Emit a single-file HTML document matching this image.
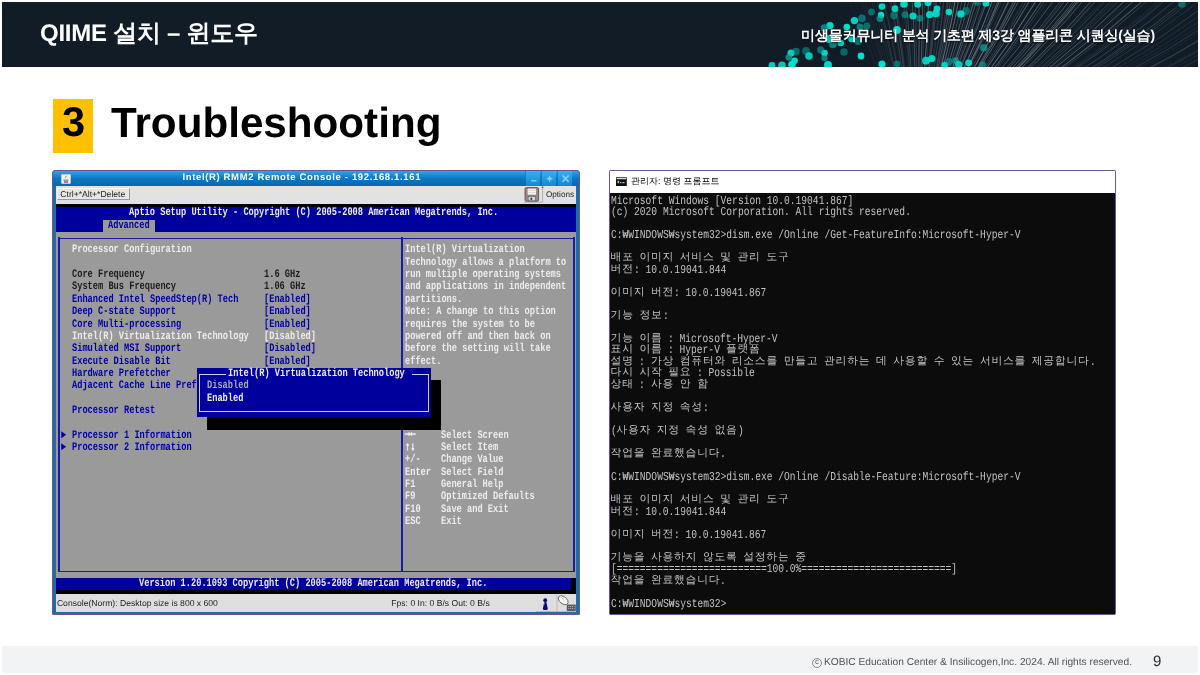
<!DOCTYPE html>
<html lang="ko">
<head>
<meta charset="utf-8">
<title>QIIME 설치 – 윈도우</title>
<style>
*{box-sizing:border-box;margin:0;padding:0}
html,body{width:1200px;height:675px;overflow:hidden;background:#fff}
body{position:relative;font-family:"Liberation Sans",sans-serif;color:#000;text-rendering:geometricPrecision}
.abs{position:absolute}
#hdr,#w1,#w2,#ftr,#num,#ttl{will-change:transform}
/* ---------- slide chrome ---------- */
#hdr{position:absolute;left:2px;top:2px;width:1196px;height:65px;background:#111c27;overflow:hidden}
#hdr svg{position:absolute;left:0;top:0}
#hdr .t1{position:absolute;left:38px;top:14px;font-weight:bold;font-size:24px;line-height:36px;color:#fff;white-space:nowrap;letter-spacing:-.25px}
#hdr .t2{position:absolute;right:43px;top:21px;font-weight:bold;font-size:14px;letter-spacing:-.15px;line-height:24px;color:#fff;white-space:nowrap;text-shadow:0 1px 2px rgba(0,0,0,.7)}
#num{position:absolute;left:53px;top:99px;width:40px;height:54px;background:#ffc000;font-weight:bold;font-size:41.6px;line-height:46px;text-align:center;letter-spacing:-1px}
#ttl{position:absolute;left:111px;top:98.2px;font-weight:bold;font-size:42.2px;line-height:50px;white-space:nowrap}
#ftr{position:absolute;left:2px;top:646px;width:1196px;height:27px;background:#f2f3f5}
#ftr .c{position:absolute;right:66px;top:9.3px;font-size:10.2px;line-height:16px;color:#555;white-space:nowrap}
#ftr .p{position:absolute;left:1151px;top:7.2px;font-size:15px;line-height:18px;color:#2a2a2a}
/* ---------- BIOS remote console window ---------- */
#w1{position:absolute;left:52px;top:170px;width:528px;height:444.7px;background:#1f6ea3;border:1px solid #6e5494;border-radius:3px 3px 1px 1px}
#w1 .tb{position:absolute;left:0;top:0;width:526px;height:15px;background:linear-gradient(#2fa5e6,#0b78c4 50%,#0a66ad);color:#fff;font-weight:bold;font-size:9.5px;line-height:14px;text-align:left;padding-left:129.4px;white-space:nowrap;letter-spacing:.65px;border-radius:2px 2px 0 0}
#w1 .tool{position:absolute;left:3.3px;top:15px;width:519.4px;height:18.3px;background:#e2e2e2}
#w1 .scr{position:absolute;left:3.3px;top:33px;width:519.4px;height:390px;background:#000;overflow:hidden}
#w1 .stat{position:absolute;left:3.3px;top:422.6px;width:519.4px;height:18.4px;background:#dedede;font-size:8px;line-height:18px;color:#222;white-space:nowrap}
#w1 .ic{position:absolute;left:8px;top:2.5px;width:10px;height:10px}
#w1 .wb{position:absolute;top:0;width:14.6px;height:14.5px;background:linear-gradient(#35b1f0,#1286d4);border-left:1px solid rgba(0,60,120,.35)}
#w1 .wb svg{position:absolute;left:0;top:0}
#w1 .tool .btn{position:absolute;left:.4px;top:2.3px;width:73.4px;height:12px;font-size:8.6px;line-height:11px;color:#222;padding-left:2.6px;white-space:nowrap;background:#e6e6e6;border:1px solid;border-color:#f8f8f8 #9a9a9a #9a9a9a #f8f8f8}
#w1 .tool .opt{position:absolute;left:489.6px;top:2px;font-size:8.2px;line-height:14px;color:#222;white-space:nowrap}
#w1 .tool svg{position:absolute;left:467.8px;top:0}
#w1 .stat span{position:absolute;top:0;font-size:8.6px;line-height:18.4px;color:#222}
#w1 .stat svg{position:absolute;left:480px;top:0}
.cc{display:inline-block;width:10px;height:10px;border:.9px solid #8a8a8a;color:#666;border-radius:50%;font-size:8px;line-height:6.8px;text-align:center;vertical-align:-.6px;margin-right:2px;margin-left:1.4px;position:relative;top:-2.2px}
.scr .b,.scr .l,.scr .t{position:absolute}
.scr .bl{background:#00009c}
.scr .gr{background:#9a9a9a}
.scr .bk{background:#000}
.scr .lb{background:#1a1aa6}
.scr .lw{background:#cfcfe6}
.scr .t{font-family:"Liberation Mono",monospace;font-weight:bold;font-size:11.5px;line-height:12.35px;height:12.35px;white-space:pre;transform-origin:0 0;transform:scaleX(.7535);margin-top:.1px}
.scr .w{color:#ececec}
.scr .ar{-webkit-text-stroke:.8px #ececec}
.scr .up{margin-top:-1.5px}
.scr .u{color:#0000a8}
.scr .k{color:#1c1c1c}
.scr .g{color:#a8a8b6}
/* ---------- cmd window ---------- */
#w2{position:absolute;left:609px;top:170px;width:506.8px;height:444.7px;background:#0c0c0c;border:1px solid #6e5494;border-radius:1.5px}
#w2 .tb{position:absolute;left:0;top:0;width:504.8px;height:22.3px;background:#fff;font-size:9px;line-height:23px;color:#000;white-space:nowrap}
#w2 .tb svg{position:absolute;left:6.3px;top:6.3px}
#w2 .tb span{position:absolute;left:21px;top:0;font-size:9px;line-height:20px;letter-spacing:0}
#w2 .c{position:absolute;font-family:"Liberation Mono",monospace;font-size:12.1px;line-height:11.53px;height:11.53px;color:#c2c2c2;white-space:pre;transform-origin:0 0;transform:scaleX(.7947)}
#w2 .k{transform:none;font-size:10.8px;letter-spacing:.74px;color:#c4c4c4}
</style>
</head>
<body>
<div id="hdr">
<!--FIBRE-->
<svg width="1196" height="65" viewBox="0 0 1196 65">
<defs><filter id="bf" x="-50%" y="-50%" width="200%" height="200%"><feGaussianBlur stdDeviation=".45"/></filter><linearGradient id="fade" x1="0" x2="1"><stop offset="0" stop-color="#111c27" stop-opacity="1"/><stop offset="1" stop-color="#111c27" stop-opacity="0"/></linearGradient></defs>
<g fill="none" stroke-linecap="round">
<path d="M878.7 86.0Q834.4 -23.5 769.0 -121.8" stroke="#9fb3bf" stroke-width="0.5" opacity="0.03"/>
<path d="M878.9 85.8Q835.0 -23.8 769.9 -122.3" stroke="#b9c7cf" stroke-width="0.5" opacity="0.03"/>
<path d="M881.1 84.7Q840.0 -26.0 777.4 -126.1" stroke="#b9c7cf" stroke-width="0.5" opacity="0.05"/>
<path d="M882.0 84.3Q842.2 -26.9 780.6 -127.7" stroke="#b9c7cf" stroke-width="0.5" opacity="0.05"/>
<path d="M882.2 84.2Q842.6 -27.1 781.4 -128.1" stroke="#cfd9de" stroke-width="0.5" opacity="0.07"/>
<path d="M884.1 83.3Q847.0 -28.8 787.9 -131.1" stroke="#7f98a6" stroke-width="0.6" opacity="0.04"/>
<path d="M884.6 83.1Q848.0 -29.2 789.6 -131.8" stroke="#b9c7cf" stroke-width="0.7" opacity="0.07"/>
<path d="M886.1 82.5Q851.5 -30.5 794.8 -134.1" stroke="#7f98a6" stroke-width="0.6" opacity="0.08"/>
<path d="M887.1 82.0Q853.9 -31.3 798.4 -135.6" stroke="#b9c7cf" stroke-width="0.5" opacity="0.09"/>
<path d="M887.6 81.9Q854.9 -31.6 799.9 -136.2" stroke="#cfd9de" stroke-width="0.7" opacity="0.08"/>
<path d="M888.5 81.5Q857.0 -32.3 803.1 -137.4" stroke="#b9c7cf" stroke-width="0.7" opacity="0.08"/>
<path d="M889.2 81.2Q858.6 -32.9 805.6 -138.4" stroke="#9fb3bf" stroke-width="0.6" opacity="0.10"/>
<path d="M890.6 80.7Q861.8 -33.9 810.5 -140.2" stroke="#cfd9de" stroke-width="0.7" opacity="0.09"/>
<path d="M892.1 80.2Q865.2 -34.9 815.7 -142.1" stroke="#cfd9de" stroke-width="0.5" opacity="0.15"/>
<path d="M893.4 79.7Q868.1 -35.6 820.1 -143.5" stroke="#cfd9de" stroke-width="0.9" opacity="0.08"/>
<path d="M894.6 79.3Q871.0 -36.4 824.5 -144.9" stroke="#7f98a6" stroke-width="0.7" opacity="0.12"/>
<path d="M894.7 79.3Q871.1 -36.4 824.6 -145.0" stroke="#9fb3bf" stroke-width="0.9" opacity="0.12"/>
<path d="M895.5 79.1Q873.0 -36.9 827.5 -145.9" stroke="#9fb3bf" stroke-width="0.9" opacity="0.17"/>
<path d="M897.8 78.4Q878.3 -38.1 835.6 -148.2" stroke="#7f98a6" stroke-width="0.9" opacity="0.14"/>
<path d="M897.9 78.4Q878.4 -38.1 835.7 -148.2" stroke="#9fb3bf" stroke-width="0.7" opacity="0.17"/>
<path d="M898.6 78.2Q880.0 -38.5 838.2 -148.9" stroke="#cfd9de" stroke-width="0.5" opacity="0.10"/>
<path d="M901.1 77.6Q885.7 -39.5 846.9 -151.1" stroke="#b9c7cf" stroke-width="0.6" opacity="0.17"/>
<path d="M901.7 77.4Q886.9 -39.8 848.8 -151.6" stroke="#9fb3bf" stroke-width="0.9" opacity="0.20"/>
<path d="M903.1 77.1Q890.3 -40.3 854.0 -152.7" stroke="#b9c7cf" stroke-width="0.7" opacity="0.12"/>
<path d="M903.2 77.1Q890.4 -40.3 854.1 -152.7" stroke="#cfd9de" stroke-width="0.7" opacity="0.21"/>
<path d="M904.0 76.9Q892.2 -40.6 857.0 -153.3" stroke="#b9c7cf" stroke-width="0.9" opacity="0.19"/>
<path d="M906.5 76.5Q897.8 -41.3 865.5 -155.0" stroke="#b9c7cf" stroke-width="0.6" opacity="0.10"/>
<path d="M907.8 76.2Q900.8 -41.7 870.2 -155.7" stroke="#7f98a6" stroke-width="0.6" opacity="0.23"/>
<path d="M908.5 76.1Q902.3 -41.8 872.5 -156.1" stroke="#7f98a6" stroke-width="0.7" opacity="0.10"/>
<path d="M908.5 76.1Q902.4 -41.8 872.5 -156.1" stroke="#cfd9de" stroke-width="0.5" opacity="0.22"/>
<path d="M909.7 75.9Q905.1 -42.1 876.7 -156.7" stroke="#cfd9de" stroke-width="0.9" opacity="0.25"/>
<path d="M911.6 75.7Q909.4 -42.4 883.4 -157.6" stroke="#9fb3bf" stroke-width="0.9" opacity="0.10"/>
<path d="M913.1 75.5Q912.7 -42.6 888.5 -158.2" stroke="#b9c7cf" stroke-width="0.9" opacity="0.32"/>
<path d="M914.3 75.4Q915.5 -42.7 892.9 -158.6" stroke="#9fb3bf" stroke-width="0.5" opacity="0.24"/>
<path d="M914.7 75.4Q916.4 -42.7 894.1 -158.7" stroke="#9fb3bf" stroke-width="0.7" opacity="0.22"/>
<path d="M916.6 75.2Q920.7 -42.8 900.9 -159.3" stroke="#b9c7cf" stroke-width="0.9" opacity="0.14"/>
<path d="M916.8 75.2Q921.1 -42.8 901.5 -159.3" stroke="#cfd9de" stroke-width="0.7" opacity="0.35"/>
<path d="M918.8 75.1Q925.6 -42.8 908.4 -159.7" stroke="#cfd9de" stroke-width="0.9" opacity="0.33"/>
<path d="M919.3 75.1Q926.7 -42.8 910.2 -159.8" stroke="#7f98a6" stroke-width="0.5" opacity="0.12"/>
<path d="M920.0 75.0Q928.3 -42.8 912.6 -159.8" stroke="#9fb3bf" stroke-width="0.6" opacity="0.23"/>
<path d="M922.0 75.0Q932.8 -42.6 919.6 -160.0" stroke="#b9c7cf" stroke-width="0.7" opacity="0.38"/>
<path d="M922.3 75.0Q933.5 -42.6 920.7 -160.0" stroke="#9fb3bf" stroke-width="0.7" opacity="0.38"/>
<path d="M923.5 75.0Q936.0 -42.4 924.6 -160.0" stroke="#b9c7cf" stroke-width="0.7" opacity="0.18"/>
<path d="M925.1 75.0Q939.8 -42.2 930.4 -159.9" stroke="#b9c7cf" stroke-width="0.7" opacity="0.18"/>
<path d="M925.8 75.0Q941.3 -42.0 932.9 -159.9" stroke="#b9c7cf" stroke-width="0.6" opacity="0.36"/>
<path d="M926.6 75.1Q943.1 -41.9 935.6 -159.8" stroke="#b9c7cf" stroke-width="0.6" opacity="0.36"/>
<path d="M928.2 75.1Q946.7 -41.5 941.2 -159.5" stroke="#9fb3bf" stroke-width="0.5" opacity="0.23"/>
<path d="M928.9 75.2Q948.2 -41.3 943.5 -159.4" stroke="#7f98a6" stroke-width="0.6" opacity="0.28"/>
<path d="M930.6 75.3Q952.0 -40.9 949.4 -158.9" stroke="#7f98a6" stroke-width="0.7" opacity="0.45"/>
<path d="M932.3 75.5Q955.8 -40.3 955.4 -158.4" stroke="#b9c7cf" stroke-width="0.9" opacity="0.16"/>
<path d="M933.0 75.5Q957.3 -40.0 957.8 -158.2" stroke="#cfd9de" stroke-width="0.5" opacity="0.30"/>
<path d="M933.2 75.5Q957.7 -40.0 958.4 -158.1" stroke="#9fb3bf" stroke-width="0.5" opacity="0.26"/>
<path d="M934.3 75.7Q960.2 -39.6 962.3 -157.7" stroke="#cfd9de" stroke-width="0.6" opacity="0.43"/>
<path d="M935.5 75.8Q962.8 -39.1 966.3 -157.1" stroke="#9fb3bf" stroke-width="0.7" opacity="0.30"/>
<path d="M936.7 76.0Q965.6 -38.5 970.7 -156.5" stroke="#cfd9de" stroke-width="0.9" opacity="0.52"/>
<path d="M938.5 76.3Q969.5 -37.7 976.8 -155.6" stroke="#b9c7cf" stroke-width="0.6" opacity="0.52"/>
<path d="M938.6 76.3Q969.8 -37.6 977.3 -155.5" stroke="#b9c7cf" stroke-width="0.9" opacity="0.15"/>
<path d="M940.4 76.6Q973.6 -36.7 983.3 -154.4" stroke="#7f98a6" stroke-width="0.9" opacity="0.39"/>
<path d="M942.2 77.0Q977.7 -35.7 989.7 -153.2" stroke="#9fb3bf" stroke-width="0.5" opacity="0.38"/>
<path d="M942.3 77.0Q977.8 -35.7 989.9 -153.2" stroke="#b9c7cf" stroke-width="0.5" opacity="0.47"/>
<path d="M943.9 77.3Q981.6 -34.6 995.8 -151.9" stroke="#9fb3bf" stroke-width="0.6" opacity="0.54"/>
<path d="M945.3 77.7Q984.6 -33.7 1000.6 -150.8" stroke="#7f98a6" stroke-width="0.6" opacity="0.28"/>
<path d="M946.4 77.9Q987.0 -33.0 1004.3 -149.8" stroke="#9fb3bf" stroke-width="0.6" opacity="0.35"/>
<path d="M946.5 77.9Q987.1 -33.0 1004.5 -149.8" stroke="#cfd9de" stroke-width="0.9" opacity="0.32"/>
<path d="M947.7 78.3Q989.8 -32.1 1008.7 -148.7" stroke="#b9c7cf" stroke-width="0.6" opacity="0.58"/>
<path d="M949.2 78.7Q993.2 -30.9 1014.2 -147.2" stroke="#b9c7cf" stroke-width="0.9" opacity="0.17"/>
<path d="M950.2 79.0Q995.3 -30.2 1017.4 -146.2" stroke="#b9c7cf" stroke-width="0.6" opacity="0.54"/>
<path d="M952.0 79.5Q999.3 -28.7 1023.7 -144.2" stroke="#9fb3bf" stroke-width="0.5" opacity="0.47"/>
<path d="M952.8 79.8Q1001.0 -28.0 1026.4 -143.4" stroke="#9fb3bf" stroke-width="0.9" opacity="0.43"/>
<path d="M953.0 79.9Q1001.4 -27.9 1027.1 -143.1" stroke="#7f98a6" stroke-width="0.6" opacity="0.20"/>
<path d="M955.3 80.7Q1006.6 -25.7 1035.4 -140.3" stroke="#9fb3bf" stroke-width="0.9" opacity="0.22"/>
<path d="M955.3 80.7Q1006.5 -25.8 1035.1 -140.4" stroke="#7f98a6" stroke-width="0.9" opacity="0.60"/>
<path d="M956.6 81.1Q1009.3 -24.6 1039.6 -138.7" stroke="#7f98a6" stroke-width="0.6" opacity="0.44"/>
<path d="M957.9 81.6Q1012.2 -23.3 1044.1 -137.0" stroke="#b9c7cf" stroke-width="0.9" opacity="0.45"/>
<path d="M958.5 81.9Q1013.6 -22.6 1046.4 -136.1" stroke="#b9c7cf" stroke-width="0.7" opacity="0.60"/>
<path d="M959.4 82.2Q1015.4 -21.7 1049.3 -134.9" stroke="#cfd9de" stroke-width="0.5" opacity="0.25"/>
<path d="M961.0 82.9Q1019.0 -20.0 1055.0 -132.5" stroke="#cfd9de" stroke-width="0.6" opacity="0.22"/>
<path d="M962.6 83.6Q1022.4 -18.2 1060.5 -130.0" stroke="#b9c7cf" stroke-width="0.5" opacity="0.54"/>
<path d="M962.3 83.5Q1021.8 -18.5 1059.5 -130.4" stroke="#b9c7cf" stroke-width="0.7" opacity="0.52"/>
<path d="M964.3 84.5Q1026.3 -16.1 1066.6 -127.1" stroke="#b9c7cf" stroke-width="0.9" opacity="0.25"/>
<path d="M964.6 84.6Q1026.9 -15.8 1067.6 -126.6" stroke="#b9c7cf" stroke-width="0.9" opacity="0.23"/>
<path d="M965.3 84.9Q1028.3 -15.0 1069.8 -125.5" stroke="#cfd9de" stroke-width="0.6" opacity="0.60"/>
<path d="M966.3 85.4Q1030.5 -13.7 1073.3 -123.8" stroke="#b9c7cf" stroke-width="0.9" opacity="0.40"/>
<path d="M968.2 86.4Q1034.6 -11.2 1080.0 -120.3" stroke="#9fb3bf" stroke-width="0.7" opacity="0.23"/>
<path d="M969.2 87.0Q1036.8 -9.8 1083.5 -118.3" stroke="#cfd9de" stroke-width="0.5" opacity="0.43"/>
<path d="M970.2 87.6Q1039.0 -8.5 1086.9 -116.4" stroke="#9fb3bf" stroke-width="0.5" opacity="0.51"/>
<path d="M970.2 87.6Q1039.1 -8.4 1087.1 -116.3" stroke="#9fb3bf" stroke-width="0.5" opacity="0.60"/>
<path d="M972.2 88.7Q1043.4 -5.5 1094.0 -112.2" stroke="#7f98a6" stroke-width="0.6" opacity="0.20"/>
<path d="M972.5 88.9Q1043.9 -5.1 1094.9 -111.7" stroke="#cfd9de" stroke-width="0.7" opacity="0.60"/>
<path d="M974.3 90.0Q1047.8 -2.4 1101.2 -107.8" stroke="#7f98a6" stroke-width="0.9" opacity="0.60"/>
<path d="M975.3 90.7Q1050.0 -0.8 1104.7 -105.4" stroke="#cfd9de" stroke-width="0.6" opacity="0.21"/>
<path d="M975.1 90.6Q1049.7 -1.0 1104.1 -105.9" stroke="#9fb3bf" stroke-width="0.5" opacity="0.31"/>
<path d="M976.2 91.3Q1052.0 0.7 1107.8 -103.4" stroke="#9fb3bf" stroke-width="0.6" opacity="0.22"/>
<path d="M977.9 92.4Q1055.5 3.4 1113.6 -99.4" stroke="#7f98a6" stroke-width="0.5" opacity="0.23"/>
<path d="M977.8 92.4Q1055.4 3.3 1113.3 -99.6" stroke="#b9c7cf" stroke-width="0.7" opacity="0.38"/>
<path d="M980.0 94.0Q1060.1 7.2 1120.9 -94.1" stroke="#b9c7cf" stroke-width="0.5" opacity="0.53"/>
<path d="M980.6 94.4Q1061.4 8.3 1123.0 -92.5" stroke="#7f98a6" stroke-width="0.7" opacity="0.26"/>
<path d="M981.1 94.9Q1062.5 9.3 1124.9 -91.0" stroke="#b9c7cf" stroke-width="0.9" opacity="0.27"/>
<path d="M982.3 95.8Q1065.1 11.6 1129.1 -87.7" stroke="#9fb3bf" stroke-width="0.7" opacity="0.55"/>
<path d="M983.5 96.8Q1067.7 13.9 1133.3 -84.3" stroke="#cfd9de" stroke-width="0.6" opacity="0.51"/>
<path d="M984.1 97.3Q1068.9 15.0 1135.3 -82.6" stroke="#cfd9de" stroke-width="0.9" opacity="0.37"/>
<path d="M984.6 97.7Q1069.9 16.0 1137.0 -81.2" stroke="#b9c7cf" stroke-width="0.7" opacity="0.57"/>
<path d="M984.9 97.9Q1070.6 16.6 1138.0 -80.3" stroke="#cfd9de" stroke-width="0.6" opacity="0.31"/>
<path d="M985.7 98.7Q1072.3 18.4 1140.9 -77.8" stroke="#9fb3bf" stroke-width="0.6" opacity="0.60"/>
<path d="M987.7 100.4Q1076.5 22.6 1147.7 -71.6" stroke="#cfd9de" stroke-width="0.7" opacity="0.48"/>
<path d="M988.4 101.1Q1078.0 24.1 1150.2 -69.3" stroke="#7f98a6" stroke-width="0.9" opacity="0.18"/>
<path d="M988.7 101.4Q1078.6 24.8 1151.2 -68.4" stroke="#cfd9de" stroke-width="0.5" opacity="0.44"/>
<path d="M990.0 102.6Q1081.4 27.8 1155.7 -64.0" stroke="#7f98a6" stroke-width="0.5" opacity="0.26"/>
<path d="M990.6 103.2Q1082.6 29.2 1157.7 -61.9" stroke="#b9c7cf" stroke-width="0.7" opacity="0.28"/>
<path d="M991.7 104.4Q1085.0 32.0 1161.8 -57.8" stroke="#7f98a6" stroke-width="0.6" opacity="0.50"/>
<path d="M992.3 105.1Q1086.3 33.5 1163.9 -55.6" stroke="#cfd9de" stroke-width="0.5" opacity="0.27"/>
<path d="M993.0 105.8Q1087.7 35.2 1166.2 -53.1" stroke="#9fb3bf" stroke-width="0.6" opacity="0.39"/>
<path d="M994.0 106.8Q1089.7 37.7 1169.5 -49.4" stroke="#cfd9de" stroke-width="0.6" opacity="0.44"/>
<path d="M994.2 107.1Q1090.1 38.2 1170.2 -48.6" stroke="#7f98a6" stroke-width="0.7" opacity="0.27"/>
<path d="M994.9 107.9Q1091.6 40.1 1172.6 -45.9" stroke="#cfd9de" stroke-width="0.6" opacity="0.15"/>
<path d="M995.4 108.5Q1092.8 41.7 1174.6 -43.5" stroke="#b9c7cf" stroke-width="0.9" opacity="0.38"/>
<path d="M996.7 110.0Q1095.4 45.1 1178.9 -38.4" stroke="#9fb3bf" stroke-width="0.6" opacity="0.34"/>
<path d="M996.8 110.2Q1095.7 45.5 1179.4 -37.7" stroke="#b9c7cf" stroke-width="0.9" opacity="0.36"/>
<path d="M997.4 111.0Q1096.9 47.3 1181.5 -35.1" stroke="#b9c7cf" stroke-width="0.5" opacity="0.37"/>
<path d="M998.9 112.9Q1100.1 51.9 1186.8 -28.2" stroke="#9fb3bf" stroke-width="0.7" opacity="0.12"/>
<path d="M999.3 113.4Q1100.9 53.1 1188.2 -26.5" stroke="#9fb3bf" stroke-width="0.5" opacity="0.25"/>
<path d="M999.8 114.0Q1101.8 54.5 1189.6 -24.5" stroke="#7f98a6" stroke-width="0.9" opacity="0.32"/>
<path d="M1001.0 115.8Q1104.3 58.6 1194.0 -18.4" stroke="#9fb3bf" stroke-width="0.5" opacity="0.35"/>
<path d="M1000.9 115.7Q1104.2 58.4 1193.7 -18.7" stroke="#7f98a6" stroke-width="0.5" opacity="0.24"/>
<path d="M1002.1 117.3Q1106.5 62.1 1197.6 -13.0" stroke="#cfd9de" stroke-width="0.6" opacity="0.32"/>
<path d="M1002.4 117.9Q1107.3 63.5 1198.9 -11.0" stroke="#7f98a6" stroke-width="0.9" opacity="0.21"/>
<path d="M1002.8 118.5Q1108.0 64.8 1200.2 -9.0" stroke="#9fb3bf" stroke-width="0.6" opacity="0.27"/>
<path d="M1003.6 119.6Q1109.5 67.5 1202.8 -4.9" stroke="#b9c7cf" stroke-width="0.7" opacity="0.18"/>
<path d="M1004.6 121.4Q1111.8 71.7 1206.6 1.3" stroke="#9fb3bf" stroke-width="0.7" opacity="0.11"/>
<path d="M1004.6 121.4Q1111.8 71.7 1206.6 1.3" stroke="#7f98a6" stroke-width="0.7" opacity="0.27"/>
<path d="M1005.4 122.7Q1113.3 74.7 1209.2 5.8" stroke="#b9c7cf" stroke-width="0.5" opacity="0.21"/>
<path d="M1006.1 123.9Q1114.7 77.4 1211.6 9.9" stroke="#9fb3bf" stroke-width="0.9" opacity="0.11"/>
<path d="M1006.6 124.9Q1115.8 79.8 1213.5 13.5" stroke="#7f98a6" stroke-width="0.9" opacity="0.10"/>
<path d="M1007.1 125.8Q1116.7 81.7 1215.1 16.4" stroke="#9fb3bf" stroke-width="0.6" opacity="0.30"/>
<path d="M1007.5 126.5Q1117.4 83.4 1216.4 18.9" stroke="#7f98a6" stroke-width="0.7" opacity="0.11"/>
<path d="M1008.3 128.2Q1119.1 87.2 1219.3 24.7" stroke="#9fb3bf" stroke-width="0.7" opacity="0.27"/>
<path d="M1008.4 128.3Q1119.2 87.6 1219.6 25.3" stroke="#cfd9de" stroke-width="0.9" opacity="0.13"/>
<path d="M1009.3 130.4Q1121.1 92.2 1222.9 32.3" stroke="#cfd9de" stroke-width="0.9" opacity="0.08"/>
<path d="M1009.5 130.8Q1121.5 93.3 1223.6 33.9" stroke="#7f98a6" stroke-width="0.9" opacity="0.23"/>
<path d="M1010.0 131.9Q1122.5 95.7 1225.3 37.6" stroke="#9fb3bf" stroke-width="0.7" opacity="0.10"/>
<path d="M1010.5 133.0Q1123.4 98.3 1226.9 41.5" stroke="#9fb3bf" stroke-width="0.9" opacity="0.14"/>
<path d="M1010.5 133.1Q1123.5 98.5 1227.1 41.8" stroke="#7f98a6" stroke-width="0.5" opacity="0.11"/>
<path d="M1011.4 135.2Q1125.1 103.3 1230.0 49.1" stroke="#9fb3bf" stroke-width="0.9" opacity="0.08"/>
<path d="M1011.7 136.1Q1125.8 105.3 1231.2 52.1" stroke="#9fb3bf" stroke-width="0.7" opacity="0.15"/>
<path d="M1012.2 137.2Q1126.6 108.0 1232.8 56.2" stroke="#b9c7cf" stroke-width="0.7" opacity="0.08"/>
<path d="M1012.6 138.3Q1127.4 110.5 1234.1 60.1" stroke="#b9c7cf" stroke-width="0.7" opacity="0.12"/>
<path d="M1012.7 138.6Q1127.5 111.1 1234.4 60.9" stroke="#9fb3bf" stroke-width="0.9" opacity="0.22"/>
<path d="M1013.0 139.6Q1128.2 113.4 1235.6 64.4" stroke="#9fb3bf" stroke-width="0.6" opacity="0.18"/>
<path d="M1013.7 141.9Q1129.5 118.5 1238.2 72.3" stroke="#b9c7cf" stroke-width="0.9" opacity="0.20"/>
<path d="M1013.8 142.0Q1129.6 118.8 1238.3 72.7" stroke="#b9c7cf" stroke-width="0.5" opacity="0.11"/>
</g>
<g filter="url(#bf)">
<circle cx="880.0" cy="4.5" r="3.3" fill="#04e3d0" opacity="0.91"/>
<circle cx="893.0" cy="6.7" r="3.4" fill="#04e3d0" opacity="0.89"/>
<circle cx="902.0" cy="2.0" r="3.8" fill="#04e3d0" opacity="0.95"/>
<circle cx="915.7" cy="2.3" r="3.5" fill="#04e3d0" opacity="0.89"/>
<circle cx="926.0" cy="0.6" r="3.6" fill="#04e3d0" opacity="0.95"/>
<circle cx="935.0" cy="6.7" r="3.3" fill="#04e3d0" opacity="0.95"/>
<circle cx="947.0" cy="10.0" r="3.3" fill="#04e3d0" opacity="0.93"/>
<circle cx="958.0" cy="12.0" r="3.8" fill="#0aa89d" opacity="0.64"/>
<circle cx="927.6" cy="12.7" r="3.6" fill="#04e3d0" opacity="0.90"/>
<circle cx="934.0" cy="11.4" r="3.8" fill="#04e3d0" opacity="0.91"/>
<circle cx="911.0" cy="14.0" r="3.6" fill="#04e3d0" opacity="0.89"/>
<circle cx="918.0" cy="16.4" r="3.3" fill="#0aa89d" opacity="0.64"/>
<circle cx="903.0" cy="12.7" r="3.5" fill="#0aa89d" opacity="0.59"/>
<circle cx="892.0" cy="13.6" r="3.8" fill="#0aa89d" opacity="0.55"/>
<circle cx="879.0" cy="13.0" r="3.2" fill="#04e3d0" opacity="0.98"/>
<circle cx="878.0" cy="16.4" r="3.5" fill="#0aa89d" opacity="0.69"/>
<circle cx="869.5" cy="10.0" r="3.4" fill="#0aa89d" opacity="0.57"/>
<circle cx="860.0" cy="16.4" r="3.8" fill="#0aa89d" opacity="0.62"/>
<circle cx="852.4" cy="18.6" r="3.7" fill="#04e3d0" opacity="0.90"/>
<circle cx="828.0" cy="23.6" r="3.7" fill="#04e3d0" opacity="0.93"/>
<circle cx="822.5" cy="26.0" r="3.8" fill="#0aa89d" opacity="0.71"/>
<circle cx="844.8" cy="25.0" r="3.3" fill="#04e3d0" opacity="0.98"/>
<circle cx="858.0" cy="25.0" r="3.5" fill="#0aa89d" opacity="0.66"/>
<circle cx="864.8" cy="24.0" r="3.5" fill="#0aa89d" opacity="0.58"/>
<circle cx="895.0" cy="28.0" r="3.9" fill="#04e3d0" opacity="1.00"/>
<circle cx="838.8" cy="41.0" r="3.3" fill="#04e3d0" opacity="0.91"/>
<circle cx="831.0" cy="42.4" r="3.8" fill="#0aa89d" opacity="0.70"/>
<circle cx="827.0" cy="37.0" r="4.0" fill="#04e3d0" opacity="0.92"/>
<circle cx="849.6" cy="37.0" r="3.3" fill="#04e3d0" opacity="0.99"/>
<circle cx="856.0" cy="39.0" r="3.9" fill="#0aa89d" opacity="0.63"/>
<circle cx="789.0" cy="51.0" r="3.6" fill="#04e3d0" opacity="0.92"/>
<circle cx="794.0" cy="49.6" r="3.8" fill="#0aa89d" opacity="0.56"/>
<circle cx="786.8" cy="55.4" r="3.3" fill="#0aa89d" opacity="0.74"/>
<circle cx="792.6" cy="58.7" r="3.3" fill="#04e3d0" opacity="0.97"/>
<circle cx="790.0" cy="62.6" r="3.8" fill="#04e3d0" opacity="0.98"/>
<circle cx="804.0" cy="49.0" r="3.9" fill="#0aa89d" opacity="0.52"/>
<circle cx="807.0" cy="54.0" r="3.8" fill="#04e3d0" opacity="0.85"/>
<circle cx="822.5" cy="51.0" r="3.3" fill="#04e3d0" opacity="0.94"/>
<circle cx="822.5" cy="56.0" r="3.2" fill="#0aa89d" opacity="0.68"/>
<circle cx="826.0" cy="63.0" r="4.0" fill="#04e3d0" opacity="0.94"/>
<circle cx="818.6" cy="47.8" r="3.6" fill="#0aa89d" opacity="0.61"/>
<circle cx="842.0" cy="50.0" r="3.8" fill="#0aa89d" opacity="0.52"/>
<circle cx="859.0" cy="54.0" r="3.4" fill="#04e3d0" opacity="0.99"/>
<circle cx="770.0" cy="63.4" r="3.4" fill="#04e3d0" opacity="0.89"/>
<circle cx="780.0" cy="63.4" r="3.8" fill="#04e3d0" opacity="0.85"/>
<circle cx="880.0" cy="62.0" r="3.6" fill="#04e3d0" opacity="1.00"/>
<circle cx="895.0" cy="62.0" r="3.4" fill="#0aa89d" opacity="0.58"/>
<circle cx="924.0" cy="58.7" r="3.9" fill="#04e3d0" opacity="0.89"/>
<circle cx="929.8" cy="56.5" r="3.6" fill="#04e3d0" opacity="0.93"/>
<circle cx="942.8" cy="63.0" r="3.2" fill="#04e3d0" opacity="0.91"/>
<circle cx="947.0" cy="59.8" r="3.7" fill="#0aa89d" opacity="0.51"/>
<circle cx="953.6" cy="58.7" r="3.4" fill="#0aa89d" opacity="0.72"/>
<circle cx="956.8" cy="62.6" r="3.7" fill="#04e3d0" opacity="0.86"/>
<circle cx="966.6" cy="60.8" r="3.4" fill="#04e3d0" opacity="0.91"/>
<circle cx="980.7" cy="63.0" r="3.5" fill="#0aa89d" opacity="0.62"/>
<circle cx="981.8" cy="45.7" r="3.8" fill="#0aa89d" opacity="0.68"/>
<circle cx="984.0" cy="1.3" r="3.5" fill="#04e3d0" opacity="0.91"/>
<circle cx="975.0" cy="0.6" r="3.2" fill="#0aa89d" opacity="0.57"/>
<circle cx="964.0" cy="9.0" r="3.9" fill="#0aa89d" opacity="0.52"/>
<circle cx="959.0" cy="12.0" r="3.6" fill="#04e3d0" opacity="0.88"/>
<circle cx="1180.0" cy="2.0" r="3.8" fill="#0aa89d" opacity="0.55"/>
</g></svg>
<!--/FIBRE-->
<div class="t1">QIIME 설치 – 윈도우</div>
<div class="t2">미생물커뮤니티 분석 기초편 제3강 앰플리콘 시퀀싱(실습)</div>
</div>
<div id="num">3</div>
<div id="ttl">Troubleshooting</div>

<div id="w1">
<div class="tb">Intel(R) RMM2 Remote Console - 192.168.1.161
<svg class="ic" viewBox="0 0 10 10"><rect x=".3" y=".3" width="9.4" height="9.4" rx="1" fill="#f4f1ea" stroke="#c9c2b4" stroke-width=".6"/><path d="M5.6 1.2c-.9 1.2-2 1.8-1.2 3.4.3-1.1 1.6-1.5 1.2-3.4z" fill="#e8761c"/><path d="M2.4 6.1h5M2.8 7.3h4.4" stroke="#3f6fb5" stroke-width=".9"/><path d="M3 8.5h4" stroke="#c33" stroke-width=".7"/></svg>
<div class="wb" style="left:472.4px"><svg width="15" height="15" viewBox="0 0 15 15"><rect x="5" y="9" width="5.6" height="1.6" rx=".6" fill="#86cdf6"/></svg></div>
<div class="wb" style="left:488.2px"><svg width="15" height="15" viewBox="0 0 15 15"><path d="M7.6 4.2l1.1 2.4 2.3 1.1-2.3 1.1-1.1 2.4-1.1-2.4-2.3-1.1 2.3-1.1z" fill="#86cdf6"/></svg></div>
<div class="wb" style="left:504px"><svg width="15" height="15" viewBox="0 0 15 15"><path d="M5 4.8l5.2 5.6M10.2 4.8L5 10.4" stroke="#86cdf6" stroke-width="1.7" stroke-linecap="round"/></svg></div>
</div>
<div class="tool"><div class="btn">Ctrl+*Alt+*Delete</div>
<svg width="22" height="18.3" viewBox="0 0 22 18.3"><path d="M18.6 1v15.2H.2" fill="none" stroke="#8c8c8c" stroke-width=".6"/><path d="M17.4 1.4l1.2-1.2 1.2 1.2z" fill="#222"/><rect x="1" y="1.6" width="13.6" height="13.6" rx="1.4" fill="#8d8d8d" stroke="#4a4a4a" stroke-width=".8"/><rect x="3.2" y="2.2" width="9.2" height="6.8" fill="#f6f6f6" stroke="#b05050" stroke-width=".5"/><path d="M3.6 4.4h8.4M3.6 6.4h8.4" stroke="#c8c8c8" stroke-width=".6"/><rect x="4.2" y="10.6" width="7" height="4.2" fill="#d9d9d9" stroke="#555" stroke-width=".5"/><rect x="6.4" y="11.6" width="1.8" height="2.4" fill="#444"/></svg>
<div class="opt">Options</div></div>
<div class="scr">
<!--BIOS-->
<div class="b bl" style="left:0.0px;top:3.3px;width:520.0px;height:24.7px"></div>
<div class="b gr" style="left:46.8px;top:15.65px;width:52.0px;height:12.35px"></div>
<div class="b gr" style="left:0.0px;top:28.0px;width:520.0px;height:345.8px"></div>
<div class="b bl" style="left:0.0px;top:373.8px;width:514.8px;height:12.35px"></div>
<div class="l lb" style="left:2.05px;top:33.62px;width:515.9px;height:1.1px"></div>
<div class="l lb" style="left:2.05px;top:367.07px;width:515.9px;height:1.1px"></div>
<div class="l lb" style="left:1.75px;top:33.32px;width:1.7px;height:335.15px"></div>
<div class="l lb" style="left:516.55px;top:33.32px;width:1.7px;height:335.15px"></div>
<div class="l lb" style="left:344.95px;top:33.32px;width:1.7px;height:335.15px"></div>
<span class="t w" style="left:72.8px;top:3.3px">Aptio Setup Utility - Copyright (C) 2005-2008 American Megatrends, Inc.</span>
<span class="t u" style="left:52.0px;top:15.65px">Advanced</span>
<span class="t w" style="left:83.2px;top:373.8px">Version 1.20.1093 Copyright (C) 2005-2008 American Megatrends, Inc.</span>
<span class="t w" style="left:15.6px;top:40.35px">Processor Configuration</span>
<span class="t k" style="left:15.6px;top:65.05px">Core Frequency</span>
<span class="t k" style="left:208.0px;top:65.05px">1.6 GHz</span>
<span class="t k" style="left:15.6px;top:77.4px">System Bus Frequency</span>
<span class="t k" style="left:208.0px;top:77.4px">1.06 GHz</span>
<span class="t u" style="left:15.6px;top:89.75px">Enhanced Intel SpeedStep(R) Tech</span>
<span class="t u" style="left:208.0px;top:89.75px">[Enabled]</span>
<span class="t u" style="left:15.6px;top:102.1px">Deep C-state Support</span>
<span class="t u" style="left:208.0px;top:102.1px">[Enabled]</span>
<span class="t u" style="left:15.6px;top:114.45px">Core Multi-processing</span>
<span class="t u" style="left:208.0px;top:114.45px">[Enabled]</span>
<span class="t w" style="left:15.6px;top:126.8px">Intel(R) Virtualization Technology</span>
<span class="t w" style="left:208.0px;top:126.8px">[Disabled]</span>
<span class="t u" style="left:15.6px;top:139.15px">Simulated MSI Support</span>
<span class="t u" style="left:208.0px;top:139.15px">[Disabled]</span>
<span class="t u" style="left:15.6px;top:151.5px">Execute Disable Bit</span>
<span class="t u" style="left:208.0px;top:151.5px">[Enabled]</span>
<span class="t u" style="left:15.6px;top:163.85px">Hardware Prefetcher</span>
<span class="t u" style="left:15.6px;top:176.2px">Adjacent Cache Line Pref</span>
<span class="t u" style="left:15.6px;top:200.9px">Processor Retest</span>
<span class="t u" style="left:15.6px;top:225.6px">Processor 1 Information</span>
<span class="t u" style="left:15.6px;top:237.95px">Processor 2 Information</span>
<span class="t u" style="left:5.2px;top:225.6px">►</span>
<span class="t u" style="left:5.2px;top:237.95px">►</span>
<span class="t w" style="left:348.4px;top:40.35px">Intel(R) Virtualization</span>
<span class="t w" style="left:348.4px;top:52.7px">Technology allows a platform to</span>
<span class="t w" style="left:348.4px;top:65.05px">run multiple operating systems</span>
<span class="t w" style="left:348.4px;top:77.4px">and applications in independent</span>
<span class="t w" style="left:348.4px;top:89.75px">partitions.</span>
<span class="t w" style="left:348.4px;top:102.1px">Note: A change to this option</span>
<span class="t w" style="left:348.4px;top:114.45px">requires the system to be</span>
<span class="t w" style="left:348.4px;top:126.8px">powered off and then back on</span>
<span class="t w" style="left:348.4px;top:139.15px">before the setting will take</span>
<span class="t w" style="left:348.4px;top:151.5px">effect.</span>
<span class="t w ar up" style="left:348.4px;top:225.6px">→←</span>
<span class="t w" style="left:384.8px;top:225.6px">Select Screen</span>
<span class="t w ar" style="left:348.4px;top:237.95px">↑↓</span>
<span class="t w" style="left:384.8px;top:237.95px">Select Item</span>
<span class="t w" style="left:348.4px;top:250.3px">+/-</span>
<span class="t w" style="left:384.8px;top:250.3px">Change Value</span>
<span class="t w" style="left:348.4px;top:262.65px">Enter</span>
<span class="t w" style="left:384.8px;top:262.65px">Select Field</span>
<span class="t w" style="left:348.4px;top:275.0px">F1</span>
<span class="t w" style="left:384.8px;top:275.0px">General Help</span>
<span class="t w" style="left:348.4px;top:287.35px">F9</span>
<span class="t w" style="left:384.8px;top:287.35px">Optimized Defaults</span>
<span class="t w" style="left:348.4px;top:299.7px">F10</span>
<span class="t w" style="left:384.8px;top:299.7px">Save and Exit</span>
<span class="t w" style="left:348.4px;top:312.05px">ESC</span>
<span class="t w" style="left:384.8px;top:312.05px">Exit</span>
<div class="b bk" style="left:374.4px;top:176.2px;width:10.4px;height:49.4px"></div>
<div class="b bk" style="left:150.8px;top:213.25px;width:234.0px;height:12.35px"></div>
<div class="b bl" style="left:140.4px;top:163.85px;width:234.0px;height:49.4px"></div>
<div class="l lw" style="left:142.5px;top:169.53px;width:27.0px;height:1.0px"></div>
<div class="l lw" style="left:355.7px;top:169.53px;width:16.6px;height:1.0px"></div>
<div class="l lw" style="left:142.5px;top:206.58px;width:229.8px;height:1.0px"></div>
<div class="l lw" style="left:142.5px;top:169.53px;width:1.0px;height:38.05px"></div>
<div class="l lw" style="left:371.3px;top:169.53px;width:1.0px;height:38.05px"></div>
<span class="t w" style="left:171.6px;top:163.85px">Intel(R) Virtualization Technology</span>
<span class="t g" style="left:150.8px;top:176.2px">Disabled</span>
<span class="t w" style="left:150.8px;top:188.55px">Enabled</span>
<!--/BIOS-->
</div>
<div class="stat"><span style="left:.6px">Console(Norm): Desktop size is 800 x 600</span><span style="left:335px">Fps: 0 In: 0 B/s Out: 0 B/s</span>
<svg width="40" height="18.4" viewBox="0 0 40 18.4"><path d="M0 17.9h40" stroke="#8a8a8a" stroke-width=".7"/><path d="M21 .6v17.4" stroke="#b4b4b4" stroke-width=".8"/><circle cx="9.2" cy="6.2" r="1.9" fill="#0a0a78"/><path d="M8.4 7.6h1.8l1.5 6.6c.3 1.3-.5 1.9-2.4 1.9s-2.7-.6-2.4-1.9z" fill="#0a0a78"/><path d="M7.4 13l1.2-5h.8z" fill="#8d93c9"/><ellipse cx="27.2" cy="6.2" rx="5.6" ry="3.5" transform="rotate(38 27.2 6.2)" fill="#f4f4f4" stroke="#555" stroke-width=".8"/><path d="M26.2 4.4l1.4 1" stroke="#6bb" stroke-width=".9"/><rect x="30.8" y="10.6" width="9" height="6.4" fill="#5a5a5a"/><path d="M32 12.6h6.6M32 14.6h6.6" stroke="#bdbdbd" stroke-width=".8" stroke-dasharray="1.2 .8"/></svg></div>
</div>

<div id="w2">
<div class="tb"><svg width="10.8" height="9.2" viewBox="0 0 11 9"><rect width="11" height="9" fill="#111"/><rect x=".6" y=".6" width="9.8" height="1.5" fill="#d8d8d8"/><path d="M1.6 4.2h1.6M1.6 5.6h1.6M4.2 5.6h1.4M6.6 5.6h2" stroke="#eee" stroke-width="1"/></svg><span>관리자: 명령 프롬프트</span></div>
<!--CMD-->
<span class="c" style="left:0.6px;top:24.5px">Microsoft Windows [Version 10.0.19041.867]</span>
<span class="c" style="left:0.6px;top:36.03px">(c) 2020 Microsoft Corporation. All rights reserved.</span>
<span class="c" style="left:0.6px;top:59.09px">C:₩WINDOWS₩system32&gt;dism.exe /Online /Get-FeatureInfo:Microsoft-Hyper-V</span>
<span class="c k" style="left:0.6px;top:82.15px;width:23.08px">배포</span>
<span class="c k" style="left:29.45px;top:82.15px;width:34.62px">이미지</span>
<span class="c k" style="left:69.84px;top:82.15px;width:34.62px">서비스</span>
<span class="c k" style="left:110.23px;top:82.15px;width:11.54px">및</span>
<span class="c k" style="left:127.54px;top:82.15px;width:23.08px">관리</span>
<span class="c k" style="left:156.39px;top:82.15px;width:23.08px">도구</span>
<span class="c k" style="left:0.6px;top:93.68px;width:23.08px">버전</span>
<span class="c" style="left:23.68px;top:93.68px">: 10.0.19041.844</span>
<span class="c k" style="left:0.6px;top:116.74px;width:34.62px">이미지</span>
<span class="c k" style="left:40.99px;top:116.74px;width:23.08px">버전</span>
<span class="c" style="left:64.07px;top:116.74px">: 10.0.19041.867</span>
<span class="c k" style="left:0.6px;top:139.8px;width:23.08px">기능</span>
<span class="c k" style="left:29.45px;top:139.8px;width:23.08px">정보</span>
<span class="c" style="left:52.53px;top:139.8px">:</span>
<span class="c k" style="left:0.6px;top:162.86px;width:23.08px">기능</span>
<span class="c k" style="left:29.45px;top:162.86px;width:23.08px">이름</span>
<span class="c" style="left:58.3px;top:162.86px">: Microsoft-Hyper-V</span>
<span class="c k" style="left:0.6px;top:174.39px;width:23.08px">표시</span>
<span class="c k" style="left:29.45px;top:174.39px;width:23.08px">이름</span>
<span class="c" style="left:58.3px;top:174.39px">: Hyper-V</span>
<span class="c k" style="left:116.0px;top:174.39px;width:34.62px">플랫폼</span>
<span class="c k" style="left:0.6px;top:185.92px;width:23.08px">설명</span>
<span class="c" style="left:29.45px;top:185.92px">:</span>
<span class="c k" style="left:40.99px;top:185.92px;width:23.08px">가상</span>
<span class="c k" style="left:69.84px;top:185.92px;width:46.16px">컴퓨터와</span>
<span class="c k" style="left:121.77px;top:185.92px;width:46.16px">리소스를</span>
<span class="c k" style="left:173.7px;top:185.92px;width:34.62px">만들고</span>
<span class="c k" style="left:214.09px;top:185.92px;width:46.16px">관리하는</span>
<span class="c k" style="left:266.02px;top:185.92px;width:11.54px">데</span>
<span class="c k" style="left:283.33px;top:185.92px;width:34.62px">사용할</span>
<span class="c k" style="left:323.72px;top:185.92px;width:11.54px">수</span>
<span class="c k" style="left:341.03px;top:185.92px;width:23.08px">있는</span>
<span class="c k" style="left:369.88px;top:185.92px;width:46.16px">서비스를</span>
<span class="c k" style="left:421.81px;top:185.92px;width:57.7px">제공합니다</span>
<span class="c" style="left:479.51px;top:185.92px">.</span>
<span class="c k" style="left:0.6px;top:197.45px;width:23.08px">다시</span>
<span class="c k" style="left:29.45px;top:197.45px;width:23.08px">시작</span>
<span class="c k" style="left:58.3px;top:197.45px;width:23.08px">필요</span>
<span class="c" style="left:87.15px;top:197.45px">: Possible</span>
<span class="c k" style="left:0.6px;top:208.98px;width:23.08px">상태</span>
<span class="c" style="left:29.45px;top:208.98px">:</span>
<span class="c k" style="left:40.99px;top:208.98px;width:23.08px">사용</span>
<span class="c k" style="left:69.84px;top:208.98px;width:11.54px">안</span>
<span class="c k" style="left:87.15px;top:208.98px;width:11.54px">함</span>
<span class="c k" style="left:0.6px;top:232.04px;width:34.62px">사용자</span>
<span class="c k" style="left:40.99px;top:232.04px;width:23.08px">지정</span>
<span class="c k" style="left:69.84px;top:232.04px;width:23.08px">속성</span>
<span class="c" style="left:92.92px;top:232.04px">:</span>
<span class="c" style="left:0.6px;top:255.1px">(</span>
<span class="c k" style="left:6.37px;top:255.1px;width:34.62px">사용자</span>
<span class="c k" style="left:46.76px;top:255.1px;width:23.08px">지정</span>
<span class="c k" style="left:75.61px;top:255.1px;width:23.08px">속성</span>
<span class="c k" style="left:104.46px;top:255.1px;width:23.08px">없음</span>
<span class="c" style="left:127.54px;top:255.1px">)</span>
<span class="c k" style="left:0.6px;top:278.16px;width:34.62px">작업을</span>
<span class="c k" style="left:40.99px;top:278.16px;width:69.24px">완료했습니다</span>
<span class="c" style="left:110.23px;top:278.16px">.</span>
<span class="c" style="left:0.6px;top:301.22px">C:₩WINDOWS₩system32&gt;dism.exe /Online /Disable-Feature:Microsoft-Hyper-V</span>
<span class="c k" style="left:0.6px;top:324.28px;width:23.08px">배포</span>
<span class="c k" style="left:29.45px;top:324.28px;width:34.62px">이미지</span>
<span class="c k" style="left:69.84px;top:324.28px;width:34.62px">서비스</span>
<span class="c k" style="left:110.23px;top:324.28px;width:11.54px">및</span>
<span class="c k" style="left:127.54px;top:324.28px;width:23.08px">관리</span>
<span class="c k" style="left:156.39px;top:324.28px;width:23.08px">도구</span>
<span class="c k" style="left:0.6px;top:335.81px;width:23.08px">버전</span>
<span class="c" style="left:23.68px;top:335.81px">: 10.0.19041.844</span>
<span class="c k" style="left:0.6px;top:358.87px;width:34.62px">이미지</span>
<span class="c k" style="left:40.99px;top:358.87px;width:23.08px">버전</span>
<span class="c" style="left:64.07px;top:358.87px">: 10.0.19041.867</span>
<span class="c k" style="left:0.6px;top:381.93px;width:34.62px">기능을</span>
<span class="c k" style="left:40.99px;top:381.93px;width:46.16px">사용하지</span>
<span class="c k" style="left:92.92px;top:381.93px;width:34.62px">않도록</span>
<span class="c k" style="left:133.31px;top:381.93px;width:46.16px">설정하는</span>
<span class="c k" style="left:185.24px;top:381.93px;width:11.54px">중</span>
<span class="c" style="left:0.6px;top:393.46px">[==========================100.0%==========================]</span>
<span class="c k" style="left:0.6px;top:404.99px;width:34.62px">작업을</span>
<span class="c k" style="left:40.99px;top:404.99px;width:69.24px">완료했습니다</span>
<span class="c" style="left:110.23px;top:404.99px">.</span>
<span class="c" style="left:0.6px;top:428.05px">C:₩WINDOWS₩system32&gt;</span>
<!--/CMD-->
</div>

<div id="ftr">
<div class="c"><span class="cc">c</span>KOBIC Education Center &amp; Insilicogen,Inc. 2024. All rights reserved.</div>
<div class="p">9</div>
</div>
</body>
</html>
